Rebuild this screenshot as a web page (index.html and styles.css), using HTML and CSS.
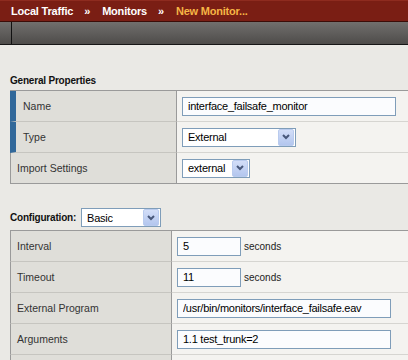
FILE: index.html
```html
<!DOCTYPE html>
<html>
<head>
<meta charset="utf-8">
<link rel="stylesheet" href="styles.css">
</head>
<body>
<div class="topbar">
  <span class="crumb">Local Traffic</span><span class="sep">»</span><span class="crumb">Monitors</span><span class="sep">»</span><span class="crumb current">New Monitor...</span>
</div>
<div class="toolbar"><div class="tb-start"></div></div>
<div class="content">
  <h2 class="section-title general-title">General Properties</h2>
  <div class="props">
    <div class="row required">
      <div class="label">Name</div>
      <div class="value"><input class="field w-long" type="text" value="interface_failsafe_monitor"></div>
    </div>
    <div class="row required">
      <div class="label">Type</div>
      <div class="value"><div class="select w-type"><span class="sel-text">External</span><span class="arrow"><svg width="8" height="6" viewBox="0 0 8 6"><polyline points="1,1 4,4 7,1" fill="none" stroke="#48587a" stroke-width="2"/></svg></span></div></div>
    </div>
    <div class="row last">
      <div class="label">Import Settings</div>
      <div class="value"><div class="select w-import"><span class="sel-text">external</span><span class="arrow"><svg width="8" height="6" viewBox="0 0 8 6"><polyline points="1,1 4,4 7,1" fill="none" stroke="#48587a" stroke-width="2"/></svg></span></div></div>
    </div>
  </div>

  <div class="config-head">
    <span class="section-title">Configuration:</span>
    <div class="select w-basic"><span class="sel-text">Basic</span><span class="arrow"><svg width="8" height="6" viewBox="0 0 8 6"><polyline points="1,1 4,4 7,1" fill="none" stroke="#48587a" stroke-width="2"/></svg></span></div>
  </div>
  <div class="props config">
    <div class="row">
      <div class="label">Interval</div>
      <div class="value"><input class="field w-short" type="text" value="5"><span class="unit">seconds</span></div>
    </div>
    <div class="row">
      <div class="label">Timeout</div>
      <div class="value"><input class="field w-short" type="text" value="11"><span class="unit">seconds</span></div>
    </div>
    <div class="row">
      <div class="label">External Program</div>
      <div class="value"><input class="field w-long" type="text" value="/usr/bin/monitors/interface_failsafe.eav"></div>
    </div>
    <div class="row">
      <div class="label">Arguments</div>
      <div class="value"><input class="field w-long" type="text" value="1.1 test_trunk=2"></div>
    </div>
    <div class="row partial">
      <div class="label"></div>
      <div class="value"></div>
    </div>
  </div>
</div>
</body>
</html>
```
FILE: styles.css
```css
html, body {
  margin: 0;
  padding: 0;
}
body {
  background: #eae9e5;
  width: 408px;
  height: 360px;
  overflow: hidden;
  font-family: "Liberation Sans", Arial, sans-serif;
}
.topbar {
  box-sizing: border-box;
  height: 22px;
  background: #7a1e14;
  border-top: 1px solid #8e2b1f;
  border-bottom: 1px solid #3b0d08;
  padding: 4px 0 0 11px;
  display: flex;
  font-size: 11px;
  font-weight: bold;
  line-height: 13px;
  letter-spacing: -0.2px;
  color: #ffffff;
  white-space: nowrap;
}
.sep {
  margin: 0 12px 0 11px;
}
.current {
  color: #f6b545;
}
.toolbar {
  box-sizing: border-box;
  height: 23px;
  background: linear-gradient(#716f6d, #4e4c4a);
  border-bottom: 1px solid #161616;
}
.tb-start {
  box-sizing: border-box;
  width: 12px;
  height: 100%;
  border-right: 1px solid #111;
}
.content {
  padding-left: 10px;
}
.section-title {
  font-size: 10px;
  font-weight: bold;
  letter-spacing: -0.2px;
  line-height: 12px;
  color: #111;
}
.general-title {
  margin: 30px 0 3px;
}
.props {
  width: 398px;
  border-top: 1px solid #9a9a9a;
}
.row {
  display: flex;
  height: 31px;
}
.row.partial {
  height: 6px;
}
.label {
  box-sizing: border-box;
  width: 167px;
  flex: none;
  display: flex;
  align-items: center;
  padding-left: 6px;
  background: #dfded9;
  border-left: 1px solid #9a9a9a;
  border-right: 1px solid #9a9a9a;
  border-bottom: 1px solid #c6c5c0;
  font-size: 10.5px;
  color: #333;
}
.config .label {
  width: 162px;
}
.row.required .label {
  border-left: 6px solid #31689a;
  padding-left: 7px;
}
.value {
  box-sizing: border-box;
  flex: 1;
  display: flex;
  align-items: center;
  padding-left: 5px;
  background: #f4f3f0;
  border-bottom: 1px solid #d6d5d1;
}
.row.partial .label,
.row.partial .value {
  border-bottom: none;
}
.row.last .label,
.row.last .value {
  border-bottom-color: #9a9a9a;
}
.field {
  box-sizing: border-box;
  height: 19px;
  margin: 0;
  border: 1px solid #7f9db9;
  border-radius: 0;
  background: #fbfcfe;
  padding: 0 0 0 5px;
  font-family: "Liberation Sans", Arial, sans-serif;
  font-size: 11px;
  letter-spacing: -0.25px;
  color: #000;
  outline: none;
}
.w-long {
  width: 214px;
}
.w-short {
  width: 64px;
}
.unit {
  margin-left: 3px;
  font-size: 10px;
  color: #222;
}
.select {
  box-sizing: border-box;
  height: 19px;
  border: 1px solid #7f9db9;
  background: #ffffff;
  display: flex;
  align-items: center;
  padding-left: 5px;
  font-size: 11px;
  letter-spacing: -0.25px;
  color: #000;
}
.sel-text {
  flex: 1;
}
.arrow {
  box-sizing: border-box;
  width: 16px;
  height: 17px;
  margin-right: 1px;
  border: 1px solid #b9cbee;
  border-radius: 2px;
  background: linear-gradient(#d3def8, #b3c6ee);
  display: flex;
  align-items: center;
  justify-content: center;
}
.w-type {
  width: 114px;
}
.w-import {
  width: 68px;
}
.w-basic {
  width: 80px;
}
.config-head {
  display: flex;
  align-items: center;
  gap: 5px;
  height: 19px;
  margin: 24px 0 3px;
}
```
